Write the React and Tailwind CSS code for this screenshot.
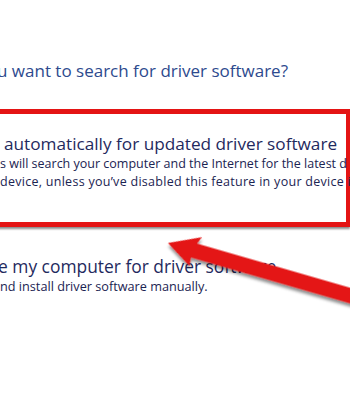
export default function App() {
  const font = { fontFamily: '"Open Sans", "Noto Sans", sans-serif' };
  return (
    <div className="relative w-[350px] h-[400px] overflow-hidden bg-white" style={font}>
      <div className="pt-[59px] pl-0">
        <div className="ml-[-3px] text-[17px] leading-[24px] text-[#2d4a8e] whitespace-nowrap">
          u want to search for driver software?
        </div>
      </div>
      <div className="mt-[26px] ml-[-10px] w-[360px] h-[118px] border-y-[5px] border-r-[4px] border-[#e41414] shadow-[0_2px_2px_rgba(0,0,0,0.45)] pl-[14px] pt-[19px]">
        <div className="text-[17.2px] leading-[22px] text-[#1f2a5e] whitespace-nowrap">
          automatically for updated driver software
        </div>
        <div className="ml-[-4px] text-[12.5px] leading-[18px] text-[#1b2452] whitespace-nowrap">
          <div>s will search your computer and the Internet for the latest d</div>
          <div className="tracking-[0.28px]">device, unless you’ve disabled this feature in your device i</div>
        </div>
      </div>
      <div className="pt-[28px] pl-0">
        <div className="ml-[-2px] text-[17.4px] leading-[22px] text-[#1f2a5e] whitespace-nowrap">
          e my computer for driver software
        </div>
        <div className="text-[12.7px] leading-[18px] text-[#1b2452] whitespace-nowrap">
          nd install driver software manually.
        </div>
      </div>
      <svg className="absolute left-0 top-0" width="350" height="400" viewBox="0 0 350 400">
        <defs>
          <filter id="sh" x="-20%" y="-50%" width="140%" height="200%">
            <feDropShadow dx="1" dy="3" stdDeviation="1.5" floodColor="#000" floodOpacity="0.45" />
          </filter>
        </defs>
        <g transform="translate(168 243) rotate(16.1)" filter="url(#sh)">
          <polygon points="0,0 31,-15 28,-7.5 220,-7.5 220,7.5 26,7.5 27,16" fill="#e41414" />
        </g>
      </svg>
    </div>
  );
}
